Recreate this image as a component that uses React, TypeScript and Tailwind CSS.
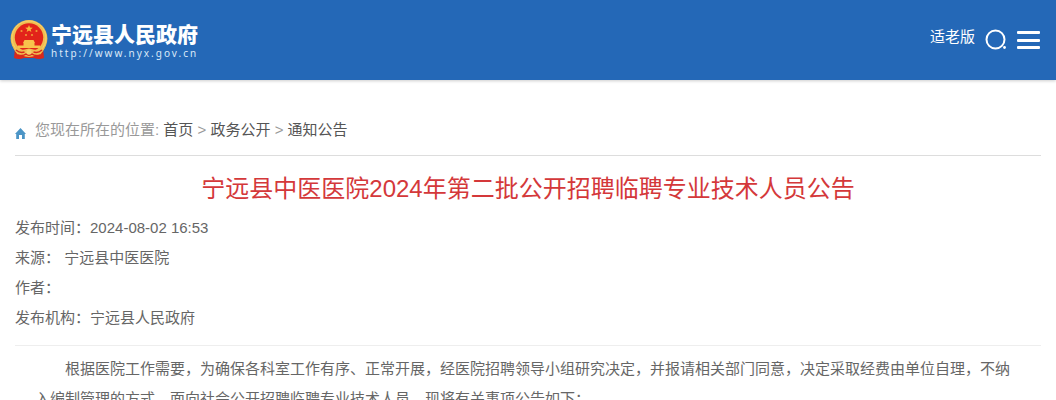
import React from "react";

const crumbs = ["首页", "政务公开", "通知公告"];

const details = [
  { label: "发布时间：", value: "2024-08-02 16:53" },
  { label: "来源：", value: "\u00a0宁远县中医医院" },
  { label: "作者：", value: "" },
  { label: "发布机构：", value: "宁远县人民政府" },
];

const Emblem = () => (
  <svg viewBox="0 0 38 42" className="h-[42px] w-[38px]" aria-hidden="true">
    {/* ribbon tails */}
    <path d="M5 29 L4 39 Q9 41 14 39 L24 39 Q29 41 34 39 L33 29 Z" fill="#d9281c" />
    <circle cx="19" cy="19.5" r="18.4" fill="#f0bd50" />
    <circle cx="19" cy="19" r="17" fill="none" stroke="#f7d36c" strokeWidth="1" />
    <circle cx="19" cy="18.5" r="14.2" fill="#e2231a" />
    <path
      d="M19 6 l1 2.6 2.8 .1 -2.2 1.7 .8 2.7 -2.4 -1.5 -2.4 1.5 .8 -2.7 -2.2 -1.7 2.8 -.1z"
      fill="#f8b83c"
    />
    <g fill="#f09a38">
      <circle cx="11.5" cy="12" r="1.1" />
      <circle cx="26.5" cy="12" r="1.1" />
      <circle cx="16" cy="16" r="1.1" />
      <circle cx="22" cy="16" r="1.1" />
    </g>
    {/* gate */}
    <path d="M14.5 21 h9 l1.5 3 h-12z M13.5 24 h11 v2.5 h5.5 v2.5 h-22 v-2.5 h5.5z" fill="#f8c24c" />
    {/* wheat, drape and gear */}
    <path d="M3.5 29 Q9 31.5 14.5 30.5 L19 29.5 L23.5 30.5 Q29 31.5 34.5 29 Q32 36 26 37 H12 Q6 36 3.5 29Z" fill="#f0bd50" />
    <path d="M6 31 Q10 34.5 14.5 33 M32 31 Q28 34.5 23.5 33" fill="none" stroke="#d9281c" strokeWidth="1.5" />
    <path d="M8 36 Q13 37.5 16 35 Q19 37.5 22 35 Q25 37.5 30 36" fill="none" stroke="#d9281c" strokeWidth="1.5" />
    <circle cx="19" cy="33" r="2.6" fill="#f7cf68" />
  </svg>
);

const SearchIcon = () => (
  <svg viewBox="0 0 22 22" className="h-[22px] w-[22px]" aria-hidden="true">
    <circle cx="10.5" cy="10.5" r="9" fill="none" stroke="#fff" strokeWidth="2" />
    <circle cx="19.5" cy="18.5" r="1.4" fill="#fff" />
  </svg>
);

const MenuIcon = () => (
  <svg viewBox="0 0 24 20" className="h-5 w-6" aria-hidden="true">
    <g fill="#fff">
      <rect x="0" y="1" width="23" height="3" rx="1" />
      <rect x="0" y="9" width="23" height="3" rx="1" />
      <rect x="0" y="16" width="23" height="3" rx="1" />
    </g>
  </svg>
);

const HomeIcon = () => (
  <svg viewBox="0 0 11 11" className="h-[11px] w-[11px]" aria-hidden="true">
    <path d="M5.5 0 L11 6 H9.8 V11 H7 V7 H4 V11 H1.2 V6 H0 Z" fill="#4c95c6" />
  </svg>
);

const Header = () => (
  <header className="flex h-20 items-center justify-between bg-[#2468b7] pr-[15px] pl-[10px] text-white shadow-[0_1px_3px_rgba(0,0,0,0.2)]">
    <a href="#" className="flex items-center gap-[3px]">
      <Emblem />
      <span className="flex flex-col pt-0.5">
        <span className="text-[21px] leading-6 font-black whitespace-nowrap">宁远县人民政府</span>
        <span className="font-['Noto_Sans'] text-[10px] leading-3 tracking-[2px] text-[#dbe8f7]">
          http://www.nyx.gov.cn
        </span>
      </span>
    </a>
    <nav className="flex items-center gap-[10px]">
      <a href="#" className="pb-1.5">
        适老版
      </a>
      <button type="button" aria-label="搜索">
        <SearchIcon />
      </button>
      <button type="button" aria-label="菜单">
        <MenuIcon />
      </button>
    </nav>
  </header>
);

const App = () => {
  return (
    <div className="h-screen overflow-hidden bg-white font-['Liberation_Sans','Noto_Sans_CJK_SC',sans-serif] text-[15px] leading-[30px] text-[#666]">
      <Header />
      <main className="px-[15px] pt-[35px]">
        <nav className="flex items-center gap-[9px] border-b border-[#ddd] pb-[10px] text-[#999]">
          <span className="pt-1.5">
            <HomeIcon />
          </span>
          <p>
            您现在所在的位置:{" "}
            {crumbs.map((name, i) => (
              <React.Fragment key={name}>
                {i > 0 && " > "}
                <a href="#" className="text-[#555]">
                  {name}
                </a>
              </React.Fragment>
            ))}
          </p>
        </nav>

        <article>
          <h1 className="pt-[17px] pb-2 text-center text-2xl leading-8 text-[#d4383a]">
            宁远县中医医院2024年第二批公开招聘临聘专业技术人员公告
          </h1>
          <dl className="border-b border-[#eee] pb-3">
            {details.map(({ label, value }) => (
              <div key={label} className="flex">
                <dt>{label}</dt>
                <dd>{value}</dd>
              </div>
            ))}
          </dl>
          <p className="px-5 pt-2 indent-[30px]">
            根据医院工作需要，为确保各科室工作有序、正常开展，经医院招聘领导小组研究决定，并报请相关部门同意，决定采取经费由单位自理，不纳入编制管理的方式，面向社会公开招聘临聘专业技术人员，现将有关事项公告如下：
          </p>
        </article>
      </main>
    </div>
  );
};

export default App;
